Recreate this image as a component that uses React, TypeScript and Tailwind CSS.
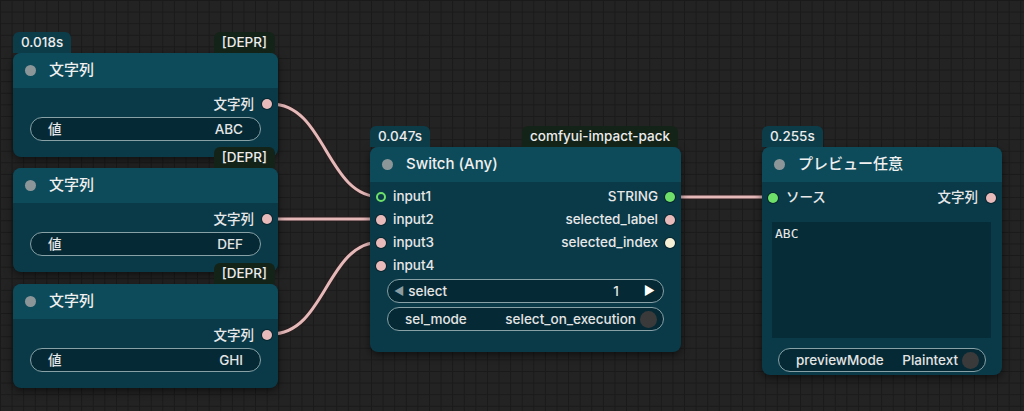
import React from 'react';

type Slot = { label: string; dot: string; ring?: boolean };

function Dot({ dot, ring }: { dot: string; ring?: boolean }) {
  if (ring) {
    return <span className="block h-[10px] w-[10px] shrink-0 rounded-full border-[2.5px] border-[#6ee06a] bg-[#0a3a48]" />;
  }
  return <span className={`block h-[10px] w-[10px] shrink-0 rounded-full shadow-[0_0_0_1px_rgba(0,0,0,0.35)] ${dot}`} />;
}

function Badge({ text, tone }: { text: string; tone: 'time' | 'pack' }) {
  const bg = tone === 'time' ? 'bg-[#0d3c49]' : 'bg-[#142318]';
  return (
    <div className={`flex h-[21px] items-center rounded-t-md px-[8px] text-[13.5px] font-medium text-[#ececec] ${bg}`}>
      {text}
    </div>
  );
}

function Pill({ children }: { children: React.ReactNode }) {
  return (
    <div className="flex h-[24px] items-center rounded-full border border-[#87a1a7] bg-[#052a35] text-[13.5px] font-medium text-[#e4e4e4]">
      {children}
    </div>
  );
}

function Toggle() {
  return <span className="block h-[17px] w-[17px] shrink-0 rounded-full bg-[#3a3a3a]" />;
}

function Node({
  title, left, top, width, height, timing, pack, children,
}: {
  title: string; left: number; top: number; width: number; height: number;
  timing?: string; pack?: string; children: React.ReactNode;
}) {
  return (
    <div className="absolute" style={{ left, top, width, height }}>
      {(timing || pack) && (
        <div className="absolute -top-[21px] left-0 right-[3px] flex justify-between">
          {timing ? <Badge text={timing} tone="time" /> : <span />}
          {pack ? <Badge text={pack} tone="pack" /> : <span />}
        </div>
      )}
      <div className="flex h-full flex-col overflow-hidden rounded-lg bg-[#0a3a48] shadow-[0_3px_8px_rgba(0,0,0,0.55)]">
        <div className="flex h-[35px] shrink-0 items-center gap-[13px] bg-[#0e4b5a] pl-[12px] text-[15px] font-medium text-[#f0f0f0]">
          <span className="block h-[11px] w-[11px] rounded-full bg-[#8c9699]" />
          {title}
        </div>
        {children}
      </div>
    </div>
  );
}

function StringNode({ top, value, timing }: { top: number; value: string; timing?: string }) {
  return (
    <Node title="文字列" left={13} top={top} width={265} height={104} timing={timing} pack="[DEPR]">
      <div className="flex flex-col px-[17px] pt-[5px]">
        <div className="-mr-[11px] flex h-[22px] items-center justify-end gap-[8px] text-[13.5px] font-medium text-[#e8e8e8]">
          文字列
          <Dot dot="bg-[#e9baba]" />
        </div>
        <div className="mt-[2px]">
          <Pill>
            <span className="pl-[17px]">値</span>
            <span className="ml-auto pr-[17px]">{value}</span>
          </Pill>
        </div>
      </div>
    </Node>
  );
}

const switchRows: [Slot, Slot | null][] = [
  [{ label: 'input1', dot: '', ring: true }, { label: 'STRING', dot: 'bg-[#6ee06a]' }],
  [{ label: 'input2', dot: 'bg-[#e9baba]' }, { label: 'selected_label', dot: 'bg-[#e9baba]' }],
  [{ label: 'input3', dot: 'bg-[#e9baba]' }, { label: 'selected_index', dot: 'bg-[#f6f0d6]' }],
  [{ label: 'input4', dot: 'bg-[#e9baba]' }, null],
];

function Links() {
  const paths = [
    'M 271 104 C 326 104, 326 197, 381 197',
    'M 271 219 L 381 219',
    'M 271 334 C 326 334, 326 242, 381 242',
    'M 670 197 L 773 197',
  ];
  return (
    <svg className="absolute inset-0 h-full w-full" viewBox="0 0 1024 411">
      {paths.map((d) => (
        <g key={d} fill="none" strokeLinecap="round">
          <path d={d} stroke="#2a1f20" strokeWidth={5} />
          <path d={d} stroke="#e6b9b9" strokeWidth={3} />
        </g>
      ))}
    </svg>
  );
}

export default function App() {
  return (
    <div className="relative h-[411px] w-[1024px] overflow-hidden bg-[#232323] bg-[linear-gradient(to_right,#1a1a1a_1px,transparent_1px),linear-gradient(to_bottom,#1a1a1a_1px,transparent_1px)] bg-[size:11.6px_11.6px] font-[Inter,'Noto_Sans_CJK_JP',sans-serif]">
      <Links />

      <StringNode top={53} value="ABC" timing="0.018s" />
      <StringNode top={168} value="DEF" />
      <StringNode top={284} value="GHI" />

      {/* Switch (Any) */}
      <Node title="Switch (Any)" left={370} top={147} width={311} height={205} timing="0.047s" pack="comfyui-impact-pack">
        <div className="flex flex-col pt-[3px]">
          {switchRows.map(([input, output]) => (
            <div key={input.label} className="flex h-[23px] items-center px-[6px] text-[13.5px] font-medium text-[#e8e8e8]">
              <div className="flex items-center gap-[7px]">
                <Dot dot={input.dot} ring={input.ring} />
                {input.label}
              </div>
              {output && (
                <div className="ml-auto flex items-center gap-[7px]">
                  {output.label}
                  <Dot dot={output.dot} />
                </div>
              )}
            </div>
          ))}
          <div className="mt-[2px] flex flex-col gap-[4px] px-[17px]">
            <Pill>
              <span className="pl-[6px] text-[11px] text-[#8a9ca1]">◀</span>
              <span className="pl-[4px]">select</span>
              <span className="ml-auto">1</span>
              <span className="pl-[25px] pr-[8px] text-[12px] text-white">▶</span>
            </Pill>
            <Pill>
              <span className="pl-[17px]">sel_mode</span>
              <span className="ml-auto pr-[4px]">select_on_execution</span>
              <span className="pr-[6px]"><Toggle /></span>
            </Pill>
          </div>
        </div>
      </Node>

      {/* preview */}
      <Node title="プレビュー任意" left={762} top={147} width={240} height={228} timing="0.255s">
        <div className="flex flex-1 flex-col pt-[4px] pb-[4px]">
          <div className="flex h-[23px] items-center px-[6px] text-[13.5px] font-medium text-[#e8e8e8]">
            <div className="flex items-center gap-[8px]">
              <Dot dot="bg-[#6ee06a]" />
              ソース
            </div>
            <div className="ml-auto flex items-center gap-[8px]">
              文字列
              <Dot dot="bg-[#e9baba]" />
            </div>
          </div>
          <div className="ml-[10px] mr-[11px] mt-[13px] h-[116px] bg-[#062c38] px-[3px] pt-[2px] font-['DejaVu_Sans_Mono',monospace] text-[13px] text-[#e8e8e8]">
            ABC
          </div>
          <div className="mx-[16px] mt-[10px]">
            <Pill>
              <span className="pl-[17px]">previewMode</span>
              <span className="ml-auto pr-[4px]">Plaintext</span>
              <span className="pr-[6px]"><Toggle /></span>
            </Pill>
          </div>
        </div>
      </Node>
    </div>
  );
}
